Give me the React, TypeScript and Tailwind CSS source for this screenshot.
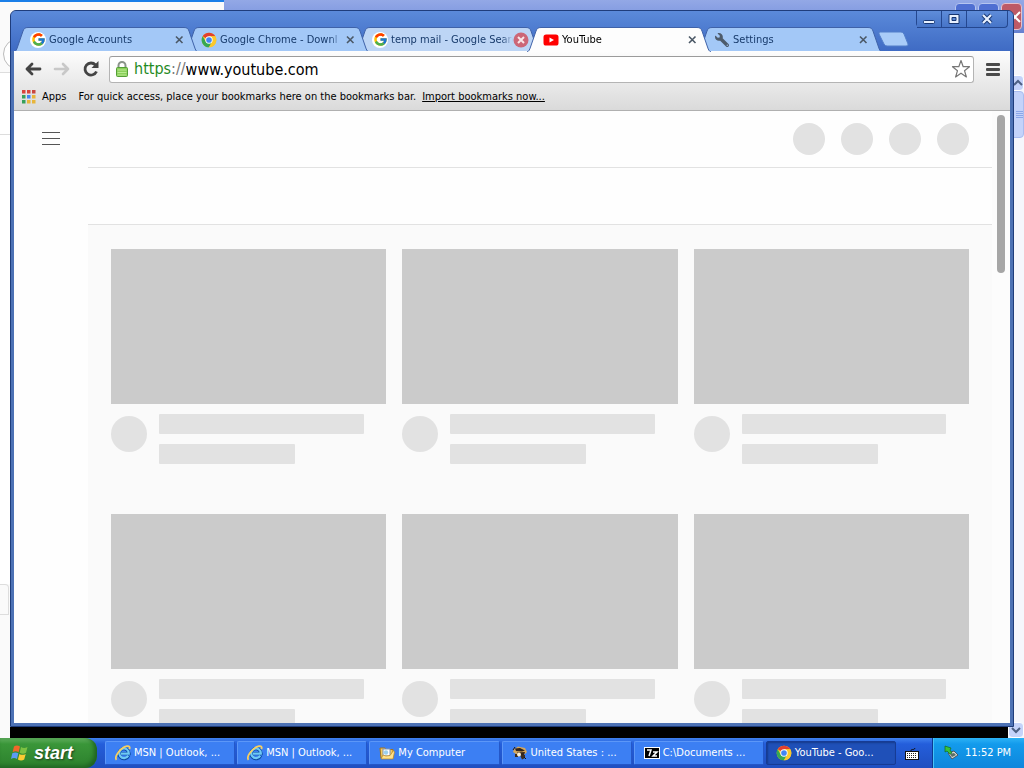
import type { ReactNode } from 'react';
import { FcGoogle } from 'react-icons/fc';
import { FaWrench } from 'react-icons/fa';

function ChromeIcon() {
  return (
    <svg viewBox="0 0 48 48" className="size-full" aria-hidden="true">
      <circle cx="24" cy="24" r="22" fill="#fbc82e" />
      <path d="M24 24 4.9 13A22 22 0 0 1 43.1 13H24Z" fill="#e2402f" />
      <path d="M4.9 13A22 22 0 0 0 24 46l9.5-16.5L24 24l-9.5 5.5Z" fill="#36a852" />
      <path d="M24 13h19.1A22 22 0 0 1 24 46l9.5-16.5Z" fill="#fbc82e" />
      <circle cx="24" cy="24" r="11" fill="#fff" />
      <circle cx="24" cy="24" r="8.5" fill="#4285f4" />
    </svg>
  );
}

function YouTubeIcon() {
  return (
    <svg viewBox="0 0 16 16" className="size-full" aria-hidden="true">
      <rect x="0.5" y="2.5" width="15" height="11" rx="2.6" fill="#f00" />
      <path d="M6.5 5.5v5L11 8Z" fill="#fff" />
    </svg>
  );
}

function GoogleIcon() {
  return (
    <span className="flex size-4 items-center justify-center rounded-full bg-white">
      <FcGoogle className="size-[15px]" />
    </span>
  );
}

function ExplorerIcon() {
  return (
    <svg viewBox="0 0 16 16" className="size-full" aria-hidden="true">
      <path d="M13.6 10.6A5 5 0 1 1 14 8.6H6" fill="none" stroke="#0b4a9e" strokeWidth="3.4" />
      <path d="M13.2 10.6A4.8 4.8 0 1 1 13.8 8.6H6" fill="none" stroke="#6fc9f5" strokeWidth="2.2" />
      <path d="M1.5 14.8C-1 12 5 2.500 12 1.200c2.500-.4 3.200 1 2.300 3" fill="none" stroke="#f6cf63" strokeWidth="1.800" />
    </svg>
  );
}

function FolderIcon() {
  return (
    <svg viewBox="0 0 16 16" className="size-full" aria-hidden="true">
      <path d="M1 3h5l1 1.500h7V13H2Z" fill="#f5c95a" stroke="#a8741a" />
      <rect x="4" y="4" width="7" height="7" fill="#fff" stroke="#7a93b8" />
      <circle cx="7" cy="7.500" r="2.200" fill="#9bd0ee" />
      <path d="M2 14 4 10l3 1 4-.5 3.500-5L15.500 7 14 14Z" fill="#ffe28a" stroke="#b98420" strokeWidth=".7" />
    </svg>
  );
}

function BeeIcon() {
  return (
    <svg viewBox="0 0 16 16" className="size-full" aria-hidden="true">
      <path d="M2 4.500 6 1.500l7 1.500 2 4-2 2H4L1 7Z" fill="#d5a75c" />
      <path d="M3 3.500 8 3l5 2.500-3 1L4 6Zm2 4 8-.5-1 3-6 .5Z" fill="#33241b" />
      <path d="M3 9h3v3H3Zm5 1h5v3l-3 1.500Z" fill="#3c2c20" />
      <circle cx="7" cy="9.500" r="2" fill="#fff1d4" />
      <path d="m1 5 2-3M12 12l2 2" stroke="#20160f" />
    </svg>
  );
}

function SevenZipIcon() {
  return (
    <svg viewBox="0 0 16 16" className="size-full" aria-hidden="true">
      <rect x=".5" y="2.500" width="15" height="11" fill="#000" stroke="#fff" />
      <path d="M3 5h4L5 11M9 7h4l-4 4h4" fill="none" stroke="#fff" strokeWidth="1.500" />
    </svg>
  );
}

function WindowsFlag() {
  return (
    <svg viewBox="0 0 20 20" className="size-5" aria-hidden="true">
      <path d="M4 3.500c2-1.400 4-1.200 6 0L8.600 9.200c-2-1.200-4-1.200-6 0Z" fill="#f0672a" />
      <path d="M11 4c2 1.200 4 1.300 6.500 0L16 9.800c-2 1.200-4.200 1.200-6.300 0Z" fill="#7cc142" />
      <path d="M2.300 10.300c2-1.200 4-1.200 6 0L7 16c-2-1.200-4-1.200-6 0Z" fill="#5c9bf3" />
      <path d="M9.400 10.900c2 1.200 4.200 1.200 6.300 0L14.200 16.600c-2 1.200-4.200 1.200-6.300 0Z" fill="#fbcb33" />
    </svg>
  );
}

type TabData = { title: string; icon: ReactNode; tone: 'idle' | 'soft' | 'active'; layer: string };

const tabs: TabData[] = [
  { title: 'Google Accounts', icon: <GoogleIcon />, tone: 'idle', layer: 'z-[5]' },
  { title: 'Google Chrome - Downl', icon: <ChromeIcon />, tone: 'idle', layer: 'z-[4]' },
  { title: 'temp mail - Google Searc', icon: <GoogleIcon />, tone: 'soft', layer: 'z-[3]' },
  { title: 'YouTube', icon: <YouTubeIcon />, tone: 'active', layer: 'z-[6]' },
  { title: 'Settings', icon: <FaWrench className="size-[14px] -scale-x-100 text-[#4d5b6b]" />, tone: 'idle', layer: 'z-[2]' },
];

const tones = {
  idle: { fill: '#a3c8f7', body: 'bg-[#a3c8f7] border-[#3f62a8]', text: 'text-[#173a6b]' },
  soft: { fill: '#bdd5f5', body: 'bg-[#bdd5f5] border-[#3f62a8]', text: 'text-[#173a6b]' },
  active: { fill: '#fdfdfd', body: 'bg-[#fdfdfd] border-[#3f62a8]', text: 'text-black' },
};

function TabEdge({ fill, flip }: { fill: string; flip?: boolean }) {
  return (
    <svg viewBox="0 0 14 25" className={flip ? 'h-[25px] w-[14px] shrink-0 -scale-x-100' : 'h-[25px] w-[14px] shrink-0'} aria-hidden="true">
      <path d="M0 25C2 24 2.500 23 3.500 20L9 4C10 1.500 11 .5 14 .5V25Z" fill={fill} />
      <path d="M0 25C2 24 2.500 23 3.500 20L9 4C10 1.500 11 .5 14 .5" fill="none" stroke="#3f62a8" />
    </svg>
  );
}

function Tab({ title, icon, tone, layer }: TabData) {
  const t = tones[tone];
  return (
    <div className={`relative -mr-[13px] flex max-w-[184px] min-w-0 flex-1 ${layer}`}>
      <TabEdge fill={t.fill} />
      <div className={`flex min-w-0 flex-1 items-center border-t ${t.body}`}>
        <button className="flex min-w-0 flex-1 items-center gap-[3px] pl-[2px] text-left">
          <span className="flex size-4 shrink-0 items-center justify-center">{icon}</span>
          <span className={`min-w-0 flex-1 overflow-hidden whitespace-nowrap [mask-image:linear-gradient(to_left,transparent,black_12px)] ${t.text}`}>{title}</span>
        </button>
        <button aria-label={`Close ${title}`} className="relative z-10 -mr-[3px] flex size-4 shrink-0 items-center justify-center">
          {tone === 'soft' ? (
            <svg viewBox="0 0 16 16" className="size-4">
              <circle cx="8" cy="8" r="7.500" fill="#cc6677" />
              <path d="m5 5 6 6m0-6-6 6" stroke="#f9e6e8" strokeWidth="2" />
            </svg>
          ) : (
            <svg viewBox="0 0 16 16" className="size-4">
              <path d="m5 4.500 6.500 6.500m0-6.500L5 11" stroke="#4b5866" strokeWidth="1.600" />
            </svg>
          )}
        </button>
      </div>
      <TabEdge fill={t.fill} flip />
    </div>
  );
}

function VideoSkeleton() {
  return (
    <div className="pb-[50px]">
      <div className="h-[155px] bg-[#cbcbcb]" />
      <div className="flex gap-3 pt-[10px]">
        <div className="mt-[2px] size-9 shrink-0 rounded-full bg-[#e2e2e2]" />
        <div className="flex flex-1 flex-col gap-[10px]">
          <div className="h-5 w-[90%] max-w-[205px] rounded-[1px] bg-[#e2e2e2]" />
          <div className="h-5 w-[60%] max-w-[136px] rounded-[1px] bg-[#e2e2e2]" />
        </div>
      </div>
    </div>
  );
}

function Toolbar() {
  const dots = ['#d8443a', '#d8443a', '#c9473f', '#36a05a', '#4285f4', '#e8b53a', '#36a05a', '#e8b53a', '#e8b53a'];
  return (
    <div className="relative z-[5] border-b border-[#b0b0b0] bg-linear-to-b from-[#fdfdfd] via-[#ebebeb] to-[#dadada]">
      <div className="flex h-[34px] items-center pt-[2px] pr-[10px] pl-2">
        <button aria-label="Back" className="mr-2 flex size-[21px] items-center justify-center">
          <svg viewBox="0 0 20 20" className="size-5"><path d="M17 10H4m5-5-5 5 5 5" fill="none" stroke="#444" strokeWidth="2.800" strokeLinecap="round" strokeLinejoin="round" /></svg>
        </button>
        <button aria-label="Forward" className="mr-2 flex size-[21px] items-center justify-center">
          <svg viewBox="0 0 20 20" className="size-5"><path d="M3 10h13m-5-5 5 5-5 5" fill="none" stroke="#c8c8c8" strokeWidth="2.600" strokeLinecap="round" strokeLinejoin="round" /></svg>
        </button>
        <button aria-label="Reload" className="mr-2 flex size-[21px] items-center justify-center">
          <svg viewBox="0 0 20 20" className="size-5">
            <path d="M15.500 12.500a6 6 0 1 1-1-6.500" fill="none" stroke="#444" strokeWidth="2.800" />
            <path d="M17.500 2v7h-7Z" fill="#444" />
          </svg>
        </button>
        <div className="flex h-[27px] min-w-0 flex-1 items-center rounded-[3px] border border-[#b4b4b4] border-t-[#9b9b9b] bg-white pr-[2px] pl-1 text-[16px]">
          <svg viewBox="0 0 16 18" className="mr-1 h-[18px] w-4 shrink-0" aria-hidden="true">
            <path d="M4.500 9V5.500a3.500 3.500 0 0 1 7 0V9" fill="none" stroke="#8b948b" strokeWidth="2" />
            <rect x="2.500" y="7.500" width="11" height="9" rx="1" fill="#8bd05b" stroke="#549f36" />
            <path d="M3.500 10h9M3.500 12.500h9M3.500 15h9" stroke="#b9ea92" />
          </svg>
          <label htmlFor="address" className="shrink-0 text-[#1f8a1f]">https<span className="text-[#777]">://</span></label>
          <input id="address" defaultValue="www.youtube.com" className="min-w-0 flex-1 bg-transparent text-black outline-none" />
          <button aria-label="Bookmark this page">
            <svg viewBox="0 0 20 20" className="size-5">
              <path d="m10 1.500 2.200 6.200h6.300l-5 4 1.900 6.300L10 14.200 4.600 18l1.900-6.300-5-4h6.300Z" fill="#fff" stroke="#777" strokeWidth="1.200" strokeLinejoin="round" />
            </svg>
          </button>
        </div>
        <button aria-label="Menu" className="ml-3 flex w-[14px] flex-col gap-[2px]">
          <span className="h-[3px] rounded-[1px] bg-[#4a4a4a]" />
          <span className="h-[3px] rounded-[1px] bg-[#4a4a4a]" />
          <span className="h-[3px] rounded-[1px] bg-[#4a4a4a]" />
        </button>
      </div>
      <div className="flex h-[25px] items-center pb-[2px] pl-2 text-black">
        <button className="flex items-center gap-[6px]">
          <svg viewBox="0 0 14 14" className="size-[14px]" aria-hidden="true">
            {dots.map((c, i) => (
              <rect key={i} x={(i % 3) * 5} y={Math.floor(i / 3) * 5} width="3.500" height="3.500" fill={c} />
            ))}
          </svg>
          Apps
        </button>
        <span className="ml-3 whitespace-nowrap">For quick access, place your bookmarks here on the bookmarks bar.</span>
        <a href="#import" className="ml-[6px] whitespace-nowrap underline">Import bookmarks now...</a>
      </div>
    </div>
  );
}

function WindowControls() {
  const cell = 'flex h-[17px] items-center justify-center border-r border-b border-[#24478f] bg-linear-to-b from-[#5f8dda] to-[#4775c8]';
  return (
    <div className="mr-[2px] ml-auto flex rounded-b-sm border-l border-[#24478f]">
      <button aria-label="Minimize" className={`${cell} w-[25px]`}>
        <svg viewBox="0 0 14 12" className="h-3 w-[14px]"><rect x="1.500" y="7.500" width="11" height="3" rx="1" fill="#e8f1ff" stroke="#173672" /></svg>
      </button>
      <button aria-label="Maximize" className={`${cell} w-[25px]`}>
        <svg viewBox="0 0 12 12" className="size-3"><path d="M1 1.500h10v9H1Z" fill="#e8f1ff" stroke="#173672" /><path d="M4 4.500h4v3H4Z" fill="#5c89d6" stroke="#173672" /></svg>
      </button>
      <button aria-label="Close" className={`${cell} w-[41px] rounded-br-sm`}>
        <svg viewBox="0 0 12 12" className="size-3"><path d="m2 2 8 8m0-8-8 8" stroke="#173672" strokeWidth="4" /><path d="m2 2 8 8m0-8-8 8" stroke="#e8f1ff" strokeWidth="2.200" /></svg>
      </button>
    </div>
  );
}

function YouTubePage() {
  return (
    <main className="relative flex min-h-0 flex-1 overflow-hidden bg-[#fefefe]">
      <div className="w-[74px] shrink-0 pt-[20px] pl-7">
        <button aria-label="Guide" className="block">
          <svg viewBox="0 0 18 16" className="h-4 w-[18px]"><path d="M0 1.500h18M0 7.500h18M0 13.500h18" stroke="#555" /></svg>
        </button>
      </div>
      <div className="min-w-0 flex-1 bg-[#fafafa]">
        <div className="flex h-[57px] items-center justify-end gap-4 border-b border-[#e2e2e2] bg-[#fefefe] pr-[23px]">
          {[0, 1, 2, 3].map((i) => <span key={i} className="size-8 rounded-full bg-[#e2e2e2]" />)}
        </div>
        <div className="h-[57px] border-b border-[#e2e2e2] bg-[#fefefe]" />
        <div className="grid grid-cols-3 gap-x-4 px-[23px] pt-6">
          {[0, 1, 2, 3, 4, 5].map((i) => <VideoSkeleton key={i} />)}
        </div>
      </div>
      <div className="w-[18px] shrink-0 bg-[#fcfcfc] pt-1 pl-[5px]">
        <div className="h-[158px] w-2 rounded-full bg-[#a6a6a6]" />
      </div>
    </main>
  );
}

function ChromeWindow() {
  return (
    <section className="absolute inset-x-[10px] top-[10px] bottom-[11px] flex flex-col overflow-hidden rounded-t-md border border-[#1f3d7c] bg-[#4d72b5] px-[3px] pb-[3px]">
      <div className="-mx-[3px] bg-linear-to-b from-[#5b8ada] to-[#3f6bc4] px-[3px]">
        <div className="flex h-4"><WindowControls /></div>
        <div className="flex h-6">
          {tabs.map((tab) => <Tab key={tab.title} {...tab} />)}
          <button aria-label="New tab" className="ml-2 flex h-6 w-8 items-center">
            <svg viewBox="0 0 32 16" className="h-4 w-8"><path d="M3 1h21q2 0 3 2l4 10q.5 2-2 2H10q-2 0-3-2L2 3q-.6-2 1-2Z" fill="#a9ccf8" stroke="#537fc9" /></svg>
          </button>
        </div>
      </div>
      <Toolbar />
      <YouTubePage />
    </section>
  );
}

function BackgroundWindow() {
  return (
    <section className="absolute inset-0 flex justify-between" aria-hidden="true">
      <div className="flex w-[224px] flex-col border-t-2 border-[#1a7fe8] bg-[#fafafa]">
        <div className="h-[71px] w-[60px] overflow-hidden border-b border-[#ddd] pt-[36px] pl-[3px]">
          <div className="size-8 rounded-full border border-[#bbb] bg-white" />
        </div>
        <div className="h-[62px] border-b border-[#ddd] bg-white" />
        <div className="h-[449px] bg-white" />
        <div className="mr-[215px] h-[31px] rounded-tr border border-l-0 border-[#ddd]" />
        <div className="mt-auto ml-[10px] h-[11px] bg-black" />
      </div>
      <div className="flex min-w-0 flex-1 flex-col">
        <div className="flex h-[33px] justify-end gap-[2px] bg-linear-to-b from-[#93a8e6] via-[#7f98df] to-[#6580d0] pt-[3px] pr-[2px]">
          <span className="size-[21px] rounded-sm border border-[#b5c4f0] bg-[#4f6fd2]" />
          <span className="size-[21px] rounded-sm border border-[#b5c4f0] bg-[#4f6fd2]" />
          <span className="flex h-[27px] w-[21px] items-center justify-end rounded-sm border border-[#e5c0ca] bg-[#bd5a66]">
            <svg viewBox="0 0 12 12" className="size-3"><path d="m1 1 10 10m0-10L1 11" stroke="#fff" strokeWidth="2" /></svg>
          </span>
        </div>
        <div className="flex min-h-0 flex-1 justify-end bg-black">
          <div className="flex w-4 flex-col bg-[#f5f6fc] pt-[42px]">
            <span className="flex h-4 items-center justify-end rounded-sm border border-white bg-[#c4d3fa]">
              <svg viewBox="0 0 10 8" className="h-2 w-[10px]"><path d="m1 6 4-4 4 4" fill="none" stroke="#4d6185" strokeWidth="2" /></svg>
            </span>
            <span className="flex h-[47px] flex-col items-end justify-center gap-px rounded-sm border border-[#a9bdf0] bg-[#c4d3fa]">
              {[0, 1, 2, 3].map((i) => <i key={i} className="h-px w-[7px] bg-[#8ba6e8]" />)}
            </span>
            <span className="mt-auto flex h-4 items-center justify-center rounded-sm border border-white bg-[#c4d3fa]">
              <svg viewBox="0 0 10 8" className="h-2 w-[10px]"><path d="m1 2 4 4 4-4" fill="none" stroke="#4d6185" strokeWidth="2" /></svg>
            </span>
          </div>
        </div>
      </div>
    </section>
  );
}

const tasks: { title: string; icon: ReactNode; active?: boolean }[] = [
  { title: 'MSN | Outlook, ...', icon: <ExplorerIcon /> },
  { title: 'MSN | Outlook, ...', icon: <ExplorerIcon /> },
  { title: 'My Computer', icon: <FolderIcon /> },
  { title: 'United States : ...', icon: <BeeIcon /> },
  { title: 'C:\\Documents ...', icon: <SevenZipIcon /> },
  { title: 'YouTube - Goo...', icon: <ChromeIcon />, active: true },
];

function Taskbar() {
  return (
    <footer className="relative flex h-[30px] shrink-0 items-stretch bg-linear-to-b from-[#3f80ee] via-[#245edb] via-20% to-[#1f4fc0] text-white">
      <button className="flex w-[97px] items-center gap-[2px] rounded-r-xl bg-linear-to-b from-[#5fae5d] via-[#3a9639] via-20% to-[#2c802d] pl-[10px] shadow-[inset_-3px_-2px_4px_#1f6322] [text-shadow:1px_1px_2px_#1d3f1d]">
        <WindowsFlag />
        <span className="pb-px pl-[2px] font-['Liberation_Sans',sans-serif] text-[18px] leading-5 font-bold italic">start</span>
      </button>
      <nav className="flex min-w-0 flex-1 gap-[2px] py-[3px] pl-2" aria-label="Open windows">
        {tasks.map((task, i) => (
          <button
            key={i}
            className={
              task.active
                ? 'flex max-w-[160px] min-w-0 flex-1 items-center gap-[3px] rounded-[2px] border border-[#163b94] bg-[#1f50b8] pl-[9px] whitespace-nowrap shadow-[inset_1px_1px_2px_#153a8c]'
                : 'flex max-w-[160px] min-w-0 flex-1 items-center gap-[3px] rounded-[2px] border border-[#5c97f8] border-r-[#2457c8] border-b-[#2457c8] bg-[#3c7ff3] pl-[9px] whitespace-nowrap'
            }
          >
            <span className="size-4 shrink-0">{task.icon}</span>
            {task.title}
          </button>
        ))}
      </nav>
      <button aria-label="Input language" className="flex w-9 shrink-0 items-center justify-center pr-1">
        <svg viewBox="0 0 14 14" className="size-[14px]">
          <path d="M6 5c0-3 3 0 4-3" fill="none" stroke="#111" />
          <rect x=".5" y="5.500" width="13" height="8" fill="#fff" stroke="#111" />
          <path d="M2 7.500h10M2 9.500h10M2 11.500h10" stroke="#222" strokeDasharray="1 1" />
        </svg>
      </button>
      <div className="flex w-[92px] shrink-0 items-center gap-[6px] border-l border-[#0c3a91] bg-linear-to-b from-[#2bb2f5] via-[#139bec] via-20% to-[#0f86dc] pl-[10px] shadow-[inset_1px_0_0_#45c4f8]">
        <svg viewBox="0 0 16 16" className="size-4 shrink-0" aria-hidden="true">
          <path d="m5 8 6-2 4 4-6 4Z" fill="#d3d7d4" stroke="#444" strokeWidth=".8" />
          <path d="m7 9 4-1 2 2-4 2Z" fill="#5a6f65" />
          <path d="m2 1 6 2-1 2 2 3-2 1-3-3-2 1Z" fill="#38c43b" stroke="#16691f" strokeWidth=".7" />
        </svg>
        <time className="whitespace-nowrap">11:52 PM</time>
      </div>
    </footer>
  );
}

export default function App() {
  return (
    <div className="flex h-screen flex-col overflow-hidden bg-black font-['DejaVu_Sans_Condensed','DejaVu_Sans','Noto_Sans',sans-serif] text-[11px] leading-4">
      <div className="relative min-h-0 flex-1">
        <BackgroundWindow />
        <ChromeWindow />
      </div>
      <Taskbar />
    </div>
  );
}
